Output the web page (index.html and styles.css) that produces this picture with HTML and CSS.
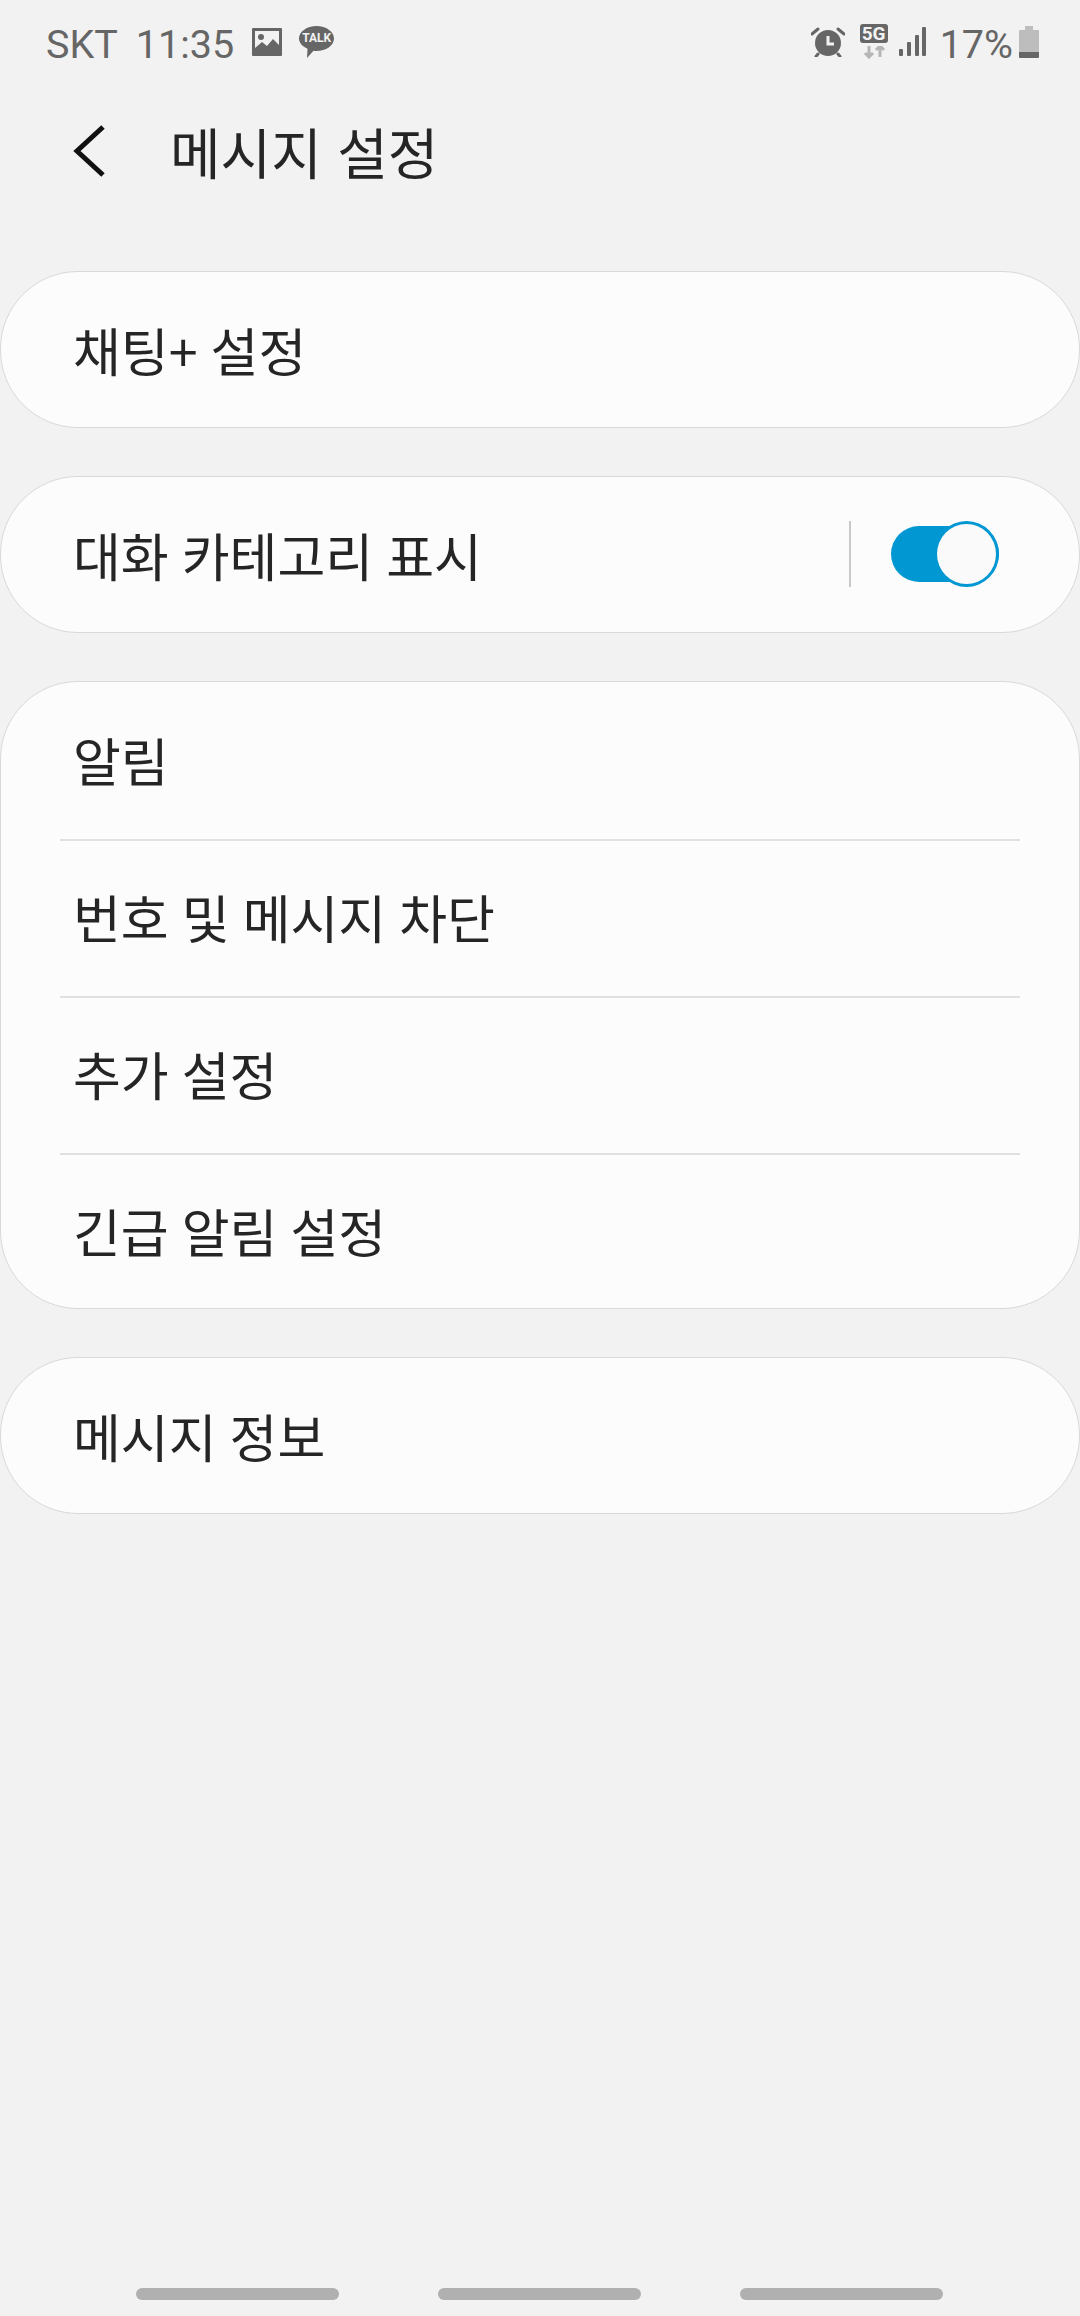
FILE: index.html
```html
<!doctype html>
<html lang="ko">
<head>
	<meta charset="utf-8">
	<title>메시지 설정</title>
	<link rel="stylesheet" href="styles.css">
</head>
<body>
<div class="page">

	<!-- status bar -->
	<div class="status">
		<div class="status-left">
			<span class="carrier">SKT</span>
			<span class="clock">11:35</span>
			<svg class="ic-pic" width="30" height="28" viewBox="0 0 30 28">
				<path fill="#666" fill-rule="evenodd" d="M1 0h28a1 1 0 0 1 1 1v26a1 1 0 0 1-1 1H1a1 1 0 0 1-1-1V1a1 1 0 0 1 1-1zM3 3v17l7-6 5 4 6-7 6 6V3z"/>
				<circle cx="9" cy="9" r="3" fill="#666"/>
			</svg>
			<span class="talk">
				<svg class="talk-bubble" width="35" height="32" viewBox="0 0 35 32">
					<path fill="#666" d="M17.500 0C27 0 35 5.500 35 12.500S27 25 17.500 25c-1 0-2 0-3-.2L8 32l.5-9.300C3.500 20.500 0 16.800 0 12.500 0 5.500 8 0 17.500 0z"/>
				</svg>
				<span class="talk-txt">TALK</span>
			</span>
		</div>
		<div class="status-right">
			<svg class="ic-alarm" width="34" height="30" viewBox="0 0 34 30">
				<circle cx="17" cy="16" r="13" fill="#666"/>
				<path d="M17 9v8h6" fill="none" stroke="#f2f2f2" stroke-width="3"/>
				<path d="M1 7l6-5M33 7l-6-5M7 27l-2 2.500M27 27l2 2.500" fill="none" stroke="#666" stroke-width="3" stroke-linecap="round"/>
			</svg>
			<div class="net">
				<span class="net-badge">5G</span>
				<svg class="net-arrows" width="28" height="13" viewBox="0 0 28 13">
					<path d="M9 0v11M5 7l4 4 4-4" fill="none" stroke="#b5b5b5" stroke-width="3"/>
					<path d="M20 11V0M16 4l4-4 4 4" fill="none" stroke="#b5b5b5" stroke-width="3"/>
				</svg>
			</div>
			<svg class="ic-signal" width="27" height="29" viewBox="0 0 27 29">
				<rect x="0" y="22" width="4" height="7" rx="1" fill="#666"/>
				<rect x="8" y="15" width="4" height="14" rx="1" fill="#666"/>
				<rect x="16" y="8" width="4" height="21" rx="1" fill="#666"/>
				<rect x="23" y="0" width="4" height="29" rx="1" fill="#666"/>
			</svg>
			<span class="batt-num">17%</span>
			<svg class="ic-batt" width="20" height="32" viewBox="0 0 20 32">
				<path fill="#bdbdbd" d="M6 0h8v4h5a1 1 0 0 1 1 1v21H0V5a1 1 0 0 1 1-1h5z"/>
				<path fill="#666" d="M0 26h20v5a1 1 0 0 1-1 1H1a1 1 0 0 1-1-1z"/>
			</svg>
		</div>
	</div>

	<!-- title -->
	<div class="appbar">
		<svg class="back" width="34" height="54" viewBox="0 0 34 54">
			<path d="M31 3L5 27l26 24" fill="none" stroke="#111" stroke-width="5"/>
		</svg>
		<div class="title">메시지 설정</div>
	</div>

	<div class="list">
		<div class="card">
			<div class="row">채팅+ 설정</div>
		</div>

		<div class="card">
			<div class="row">
				<span class="row-label">대화 카테고리 표시</span>
				<span class="vline"></span>
				<span class="toggle"><span class="knob"></span></span>
			</div>
		</div>

		<div class="card">
			<div class="row">알림</div>
			<div class="sep"></div>
			<div class="row">번호 및 메시지 차단</div>
			<div class="sep"></div>
			<div class="row">추가 설정</div>
			<div class="sep"></div>
			<div class="row">긴급 알림 설정</div>
		</div>

		<div class="card">
			<div class="row">메시지 정보</div>
		</div>
	</div>

	<div class="navbar">
		<span class="navpill"></span>
		<span class="navpill"></span>
		<span class="navpill"></span>
	</div>
</div>
</body>
</html>
```

FILE: styles.css
```css
*{
	box-sizing: border-box;
}
html,body{
	margin: 0;
	padding: 0;
	background: #f2f2f2;
}
.page{
	display: flex;
	flex-direction: column;
	height: 2316px;
	font-family: "Noto Sans CJK KR", "Noto Sans", sans-serif;
	color: #252525;
}

/* status bar */
.status{
	display: flex;
	justify-content: space-between;
	align-items: center;
	height: 83px;
	padding: 0 41px 0 46px;
	font-family: Roboto, sans-serif;
	font-size: 39.500px;
	color: #666;
}
.status-left,
.status-right{
	display: flex;
	align-items: center;
}
.carrier,
.clock,
.batt-num{
	padding-top: 5px;
}
.clock{
	margin-left: 18px;
}
.ic-pic{
	margin-left: 18px;
}
.talk{
	position: relative;
	display: block;
	width: 35px;
	height: 32px;
	margin-left: 17px;
}
.talk-bubble{
	display: block;
}
.talk-txt{
	position: absolute;
	top: 5px;
	left: 0;
	width: 35px;
	font-size: 12px;
	line-height: 15px;
	font-weight: 700;
	text-align: center;
	color: #f2f2f2;
}
.net{
	display: flex;
	flex-direction: column;
	width: 28px;
	margin-left: 15px;
}
.net-badge{
	display: block;
	height: 19px;
	border-radius: 3px;
	background: #666;
	color: #f2f2f2;
	font-size: 19px;
	font-weight: 700;
	line-height: 20px;
	text-align: center;
}
.net-arrows{
	display: block;
	margin-top: 3px;
}
.ic-signal{
	margin-left: 11px;
}
.batt-num{
	margin-left: 14px;
}
.ic-batt{
	margin-left: 6px;
}

/* title */
.appbar{
	display: flex;
	align-items: center;
	height: 135px;
	padding-left: 72px;
}
.title{
	margin-left: 64px;
	font-size: 55px;
	line-height: 1;
}

.list{
	display: flex;
	flex-direction: column;
	gap: 48px;
	margin-top: 53px;
}
.card{
	background: #fcfcfc;
	border: 1px solid #d9d9d9;
	border-radius: 78px;
}
.row{
	display: flex;
	align-items: center;
	height: 155px;
	padding: 0 80px 0 72px;
	font-size: 52px;
	word-spacing: -1.500px;
}
.row-label{
	flex: 1;
}
/* the lines sit a little under the row edge */
.sep{
	height: 2px;
	margin: 1.500px 59px -1.500px;
	background: #e0e0e0;
}
.vline{
	width: 2px;
	height: 66px;
	background: #c8c8c8;
	margin: 0 40px 2px 0;
}
.toggle{
	position: relative;
	display: block;
	width: 108px;
	height: 56px;
	margin-bottom: 2px;
	border-radius: 28px;
	background: #0097d3;
}
.knob{
	position: absolute;
	top: -5px;
	right: 0;
	width: 65px;
	height: 66px;
	border-radius: 50%;
	background: #fafafa;
	border: 3px solid #0097d3;
}

.navbar{
	display: flex;
	justify-content: center;
	gap: 99px;
	margin-top: auto;
	padding: 0 1px 16px 0;
}
.navpill{
	width: 203px;
	height: 12px;
	border-radius: 6px;
	background: #b0b0b0;
}
```
